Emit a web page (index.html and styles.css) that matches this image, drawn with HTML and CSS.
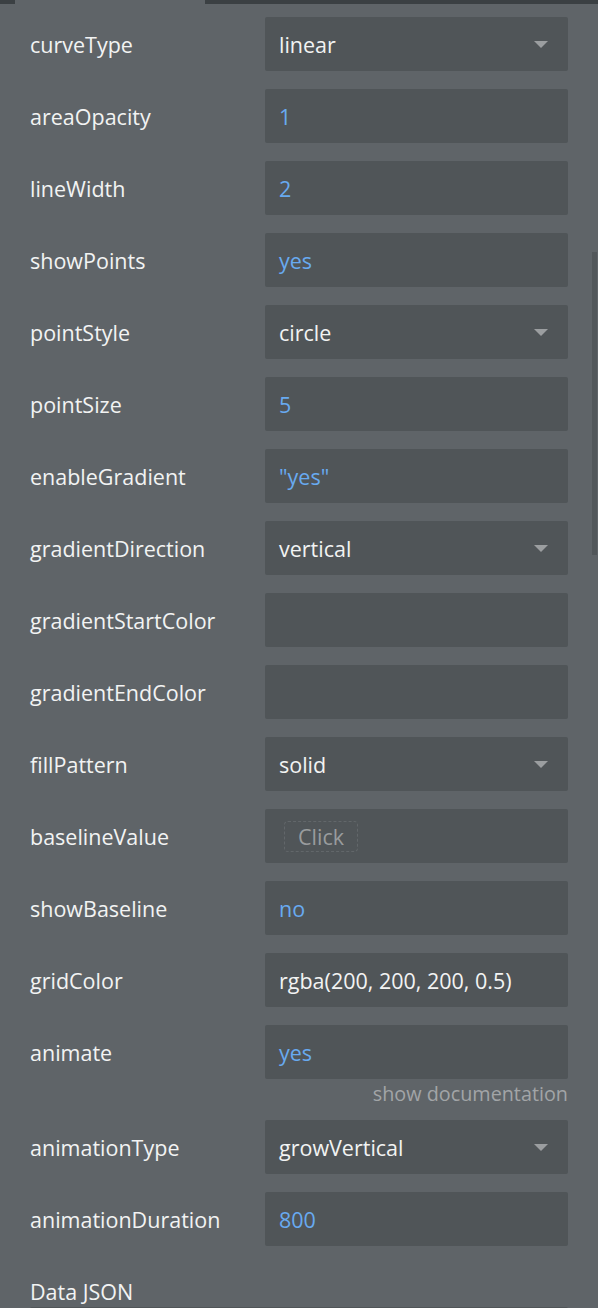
FILE: index.html
```html
<!DOCTYPE html>
<html>
<head>
<meta charset="utf-8">
<link rel="stylesheet" href="styles.css">
</head>
<body>
<div class="topbar"><div class="tab-gap"></div><div class="tab-active"></div><div class="tab-rest"></div></div>
<div class="scrollbar"></div>
<div class="panel">
  <div class="row"><div class="label">curveType</div><div class="field select"><span class="val">linear</span><span class="arrow"></span></div></div>
  <div class="row"><div class="label">areaOpacity</div><div class="field"><span class="val blue">1</span></div></div>
  <div class="row"><div class="label">lineWidth</div><div class="field"><span class="val blue">2</span></div></div>
  <div class="row"><div class="label">showPoints</div><div class="field"><span class="val blue">yes</span></div></div>
  <div class="row"><div class="label">pointStyle</div><div class="field select"><span class="val">circle</span><span class="arrow"></span></div></div>
  <div class="row"><div class="label">pointSize</div><div class="field"><span class="val blue">5</span></div></div>
  <div class="row"><div class="label">enableGradient</div><div class="field"><span class="val blue">"yes"</span></div></div>
  <div class="row"><div class="label">gradientDirection</div><div class="field select"><span class="val">vertical</span><span class="arrow"></span></div></div>
  <div class="row"><div class="label">gradientStartColor</div><div class="field"></div></div>
  <div class="row"><div class="label">gradientEndColor</div><div class="field"></div></div>
  <div class="row"><div class="label">fillPattern</div><div class="field select"><span class="val">solid</span><span class="arrow"></span></div></div>
  <div class="row"><div class="label">baselineValue</div><div class="field"><span class="click">Click</span></div></div>
  <div class="row"><div class="label">showBaseline</div><div class="field"><span class="val blue">no</span></div></div>
  <div class="row"><div class="label">gridColor</div><div class="field"><span class="val">rgba(200, 200, 200, 0.5)</span></div></div>
  <div class="group">
    <div class="row"><div class="label">animate</div><div class="field"><span class="val blue">yes</span></div></div>
    <div class="doc">show documentation</div>
  </div>
  <div class="row"><div class="label">animationType</div><div class="field select"><span class="val">growVertical</span><span class="arrow"></span></div></div>
  <div class="row"><div class="label">animationDuration</div><div class="field"><span class="val blue">800</span></div></div>
  <div class="section-label">Data JSON</div>
  <div class="json-box"></div>
</div>
</body>
</html>
```
FILE: styles.css
```css
html, body {
  margin: 0;
  padding: 0;
  background: #5f6468;
  height: 1308px;
  overflow: hidden;
}
body {
  font-family: "Open Sans", "Noto Sans", sans-serif;
  color: #f2f3f3;
  position: relative;
}
.topbar {
  display: flex;
  height: 4px;
}
.tab-gap { width: 15px; background: #3b4043; }
.tab-active { width: 190px; background: #5f6468; }
.tab-rest { flex: 1; background: #3b4043; }
.scrollbar {
  position: absolute;
  right: 1px;
  top: 252px;
  width: 5px;
  height: 303px;
  background: #52575a;
}
.panel {
  padding: 13px 30px 0 30px;
  display: flex;
  flex-direction: column;
  gap: 18px;
}
.group {
  display: flex;
  flex-direction: column;
}
.row {
  display: grid;
  grid-template-columns: 235px 1fr;
  align-items: center;
  height: 54px;
}
.label {
  font-size: 21.5px;
  color: #f2f3f3;
  line-height: 28px;
  padding-top: 2px;
  white-space: nowrap;
}
.field {
  height: 54px;
  background: #505558;
  border-radius: 2px;
  display: flex;
  align-items: center;
  padding: 0 20px 0 14px;
  box-sizing: border-box;
  position: relative;
}
.val {
  font-size: 21.5px;
  color: #f2f3f3;
  flex: 1;
  line-height: 28px;
  padding-top: 2px;
}
.val.blue { color: #68aaf0; }
.arrow {
  width: 0;
  height: 0;
  border-left: 7px solid transparent;
  border-right: 7px solid transparent;
  border-top: 7px solid #9b9ea0;
}
.click {
  margin-left: 5px;
  border: 1px dashed #62676a;
  border-radius: 4px;
  color: #999c9e;
  font-size: 21.5px;
  line-height: 29px;
  padding: 0 13px;
}
.doc {
  text-align: right;
  font-size: 19.8px;
  color: #a2a5a7;
  line-height: 17px;
  padding-top: 6px;
}
.section-label {
  font-size: 21.5px;
  line-height: 28px;
  margin-top: 14px;
}
.json-box {
  margin-top: -17px;
  height: 40px;
  background: #505558;
  border-radius: 2px;
}
```
